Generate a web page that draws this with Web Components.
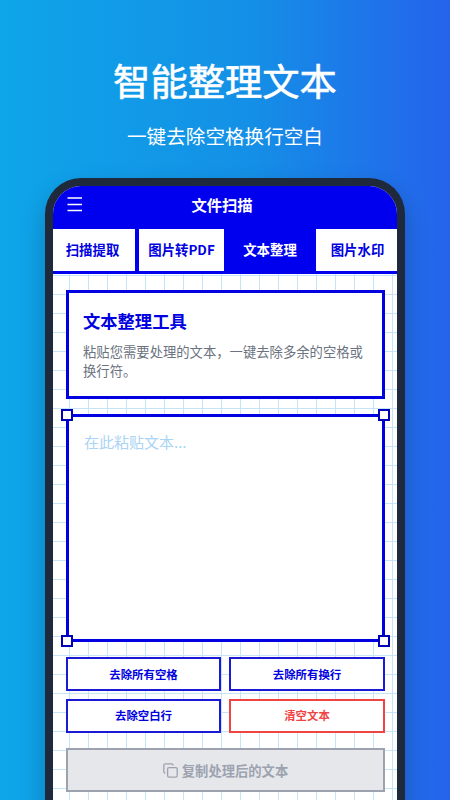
<!DOCTYPE html>
<html lang="zh">
<head>
<meta charset="utf-8">
<title>文件扫描</title>
<style>
    html, body {
        margin: 0;
        padding: 0;
        height: 800px;
        overflow: hidden;
        font-family: "Noto Sans CJK SC", "Noto Sans", sans-serif;
    }
    body {
        background: linear-gradient(90deg, #0ea5e9 0%, #1490e6 55%, #2563eb 100%);
    }
</style>
</head>
<body>
<promo-head></promo-head>
<phone-frame>
    <top-bar>文件扫描</top-bar>
    <tab-strip>
        <tab-item style="width:82px;margin-right:4px;padding-right:3px">扫描提取</tab-item>
        <tab-item style="width:85px">图片转PDF</tab-item>
        <tab-item active style="width:92px">文本整理</tab-item>
        <tab-item style="width:81px;padding-left:2px">图片水印</tab-item>
    </tab-strip>
    <grid-page>
        <tool-card heading="文本整理工具">粘贴您需要处理的文本，一键去除多余的空格或换行符。</tool-card>
        <text-box placeholder="在此粘贴文本..."></text-box>
        <button-grid>
            <action-btn>去除所有空格</action-btn>
            <action-btn>去除所有换行</action-btn>
            <action-btn>去除空白行</action-btn>
            <action-btn danger>清空文本</action-btn>
        </button-grid>
        <copy-btn>复制处理后的文本</copy-btn>
    </grid-page>
</phone-frame>

<script>
class PromoHead extends HTMLElement {
    constructor() {
        super();
        this.attachShadow({ mode: 'open' });
        this.shadowRoot.innerHTML = `
            <style>
                :host {
                    display: flex;
                    flex-direction: column;
                    align-items: center;
                    height: 178px;
                    color: #fff;
                    text-align: center;
                }
                h1 {
                    margin: 54px 0 0;
                    font-size: 37.3px;
                    line-height: 52px;
                    font-weight: 400;
                    -webkit-text-stroke: .6px #fff;
                }
                p {
                    margin: 16px 0 0;
                    font-size: 19.6px;
                    line-height: 28px;
                    font-weight: 400;
                }
            </style>
            <h1>智能整理文本</h1>
            <p>一键去除空格换行空白</p>
        `;
    }
}

class PhoneFrame extends HTMLElement {
    constructor() {
        super();
        this.attachShadow({ mode: 'open' });
        this.shadowRoot.innerHTML = `
            <style>
                :host {
                    display: block;
                    box-sizing: border-box;
                    width: 360px;
                    height: 640px;
                    margin: 0 auto;
                    border: 8px solid #1e293b;
                    border-bottom: 0;
                    border-radius: 36px 36px 0 0;
                    overflow: hidden;
                    background: #fff;
                    box-shadow: 0 12px 24px rgba(0, 0, 0, .22);
                }
            </style>
            <slot></slot>
        `;
    }
}

class TopBar extends HTMLElement {
    constructor() {
        super();
        this.attachShadow({ mode: 'open' });
        this.shadowRoot.innerHTML = `
            <style>
                :host {
                    display: flex;
                    align-items: center;
                    justify-content: center;
                    position: relative;
                    box-sizing: border-box;
                    height: 43px;
                    padding: 0 6px 7px 0;
                    background: #0000ee;
                    color: #fff;
                    font-size: 15.3px;
                    font-weight: 700;
                }
                svg {
                    position: absolute;
                    left: 14px;
                    top: 10px;
                }
            </style>
            <svg width="16" height="16" viewBox="0 0 16 16" fill="none" stroke="#fff" stroke-width="1.3">
                <path d="M0.5 2H15M0.5 8.5H15M0.5 14.5H15"/>
            </svg>
            <slot></slot>
        `;
    }
}

class TabStrip extends HTMLElement {
    constructor() {
        super();
        this.attachShadow({ mode: 'open' });
        this.shadowRoot.innerHTML = `
            <style>
                :host {
                    display: flex;
                    height: 45px;
                    box-sizing: border-box;
                    background: #0000ee;
                    padding-bottom: 3px;
                }
            </style>
            <slot></slot>
        `;
    }
}

class TabItem extends HTMLElement {
    constructor() {
        super();
        this.attachShadow({ mode: 'open' });
        this.shadowRoot.innerHTML = `
            <style>
                :host {
                    display: flex;
                    align-items: center;
                    justify-content: center;
                    flex: none;
                    box-sizing: border-box;
                    padding-bottom: 2px;
                    background: #fff;
                    color: #0000e0;
                    font-size: 13.4px;
                    font-weight: 700;
                }
                :host([active]) {
                    background: #0000ee;
                    color: #fff;
                }
            </style>
            <slot></slot>
        `;
    }
}

class GridPage extends HTMLElement {
    constructor() {
        super();
        this.attachShadow({ mode: 'open' });
        this.shadowRoot.innerHTML = `
            <style>
                :host {
                    display: flex;
                    flex-direction: column;
                    box-sizing: border-box;
                    height: 600px;
                    padding: 16px 12px 0 13px;
                    background-color: #fff;
                    background-image:
                        linear-gradient(#c5e4f7 1px, transparent 1px),
                        linear-gradient(90deg, #c5e4f7 1px, transparent 1px);
                    background-size: 19px 19px;
                    background-position: 16px 1px;
                }
            </style>
            <slot></slot>
        `;
    }
}

class ToolCard extends HTMLElement {
    constructor() {
        super();
        this.attachShadow({ mode: 'open' });
        const heading = this.getAttribute('heading') || '';
        this.shadowRoot.innerHTML = `
            <style>
                :host {
                    display: block;
                    box-sizing: border-box;
                    height: 109px;
                    border: 3px solid #0000e0;
                    background: #fff;
                    padding: 16px 14px 0;
                }
                h2 {
                    margin: 0;
                    font-size: 17.3px;
                    line-height: 24px;
                    font-weight: 700;
                    color: #0000e0;
                }
                p {
                    margin: 9px 0 0;
                    font-size: 13.33px;
                    line-height: 19px;
                    color: #6b7280;
                }
            </style>
            <h2>${heading}</h2>
            <p><slot></slot></p>
        `;
    }
}

class TextBox extends HTMLElement {
    constructor() {
        super();
        this.attachShadow({ mode: 'open' });
        const placeholder = this.getAttribute('placeholder') || '';
        this.shadowRoot.innerHTML = `
            <style>
                :host {
                    display: block;
                    position: relative;
                    box-sizing: border-box;
                    height: 228px;
                    margin-top: 15px;
                    border: 3px solid #0000e0;
                    background: #fff;
                    padding: 14px 15px;
                    font-size: 15px;
                    line-height: 22px;
                    color: #a9d4f5;
                }
                i {
                    position: absolute;
                    box-sizing: border-box;
                    width: 12px;
                    height: 12px;
                    border: 2px solid #0000b8;
                    background: #fff;
                }
                .tl { left: -8px; top: -8px; }
                .tr { right: -8px; top: -8px; }
                .bl { left: -8px; bottom: -8px; }
                .br { right: -8px; bottom: -8px; }
            </style>
            ${placeholder}
            <i class="tl"></i><i class="tr"></i><i class="bl"></i><i class="br"></i>
        `;
    }
}

class ButtonGrid extends HTMLElement {
    constructor() {
        super();
        this.attachShadow({ mode: 'open' });
        this.shadowRoot.innerHTML = `
            <style>
                :host {
                    display: grid;
                    grid-template-columns: 155px 156px;
                    grid-auto-rows: 34px;
                    gap: 7.5px 8px;
                    margin-top: 15px;
                }
            </style>
            <slot></slot>
        `;
    }
}

class ActionBtn extends HTMLElement {
    constructor() {
        super();
        this.attachShadow({ mode: 'open' });
        this.shadowRoot.innerHTML = `
            <style>
                :host {
                    display: flex;
                    align-items: center;
                    justify-content: center;
                    box-sizing: border-box;
                    padding-bottom: 1px;
                    border: 2px solid #1a1ad6;
                    background: #fff;
                    color: #0000e0;
                    font-size: 11.4px;
                    font-weight: 700;
                }
                :host([danger]) {
                    border-color: #ef4444;
                    color: #ef4444;
                }
            </style>
            <slot></slot>
        `;
    }
}

class CopyBtn extends HTMLElement {
    constructor() {
        super();
        this.attachShadow({ mode: 'open' });
        this.shadowRoot.innerHTML = `
            <style>
                :host {
                    display: flex;
                    align-items: center;
                    justify-content: center;
                    gap: 4px;
                    box-sizing: border-box;
                    height: 44px;
                    margin-top: 15.5px;
                    border: 2px solid #9ca3af;
                    background: #e5e7eb;
                    color: #9ca3af;
                    font-size: 13.3px;
                    font-weight: 700;
                }
            </style>
            <svg width="15" height="15" viewBox="0 0 15 15" fill="none" stroke="#9ca3af" stroke-width="1.3">
                <rect x="4.6" y="4.6" width="9.6" height="9.6" rx="1.4"/>
                <path d="M2.4 10.2A1.6 1.6 0 0 1 0.8 8.6V2.4A1.6 1.6 0 0 1 2.4 0.8H8.6A1.6 1.6 0 0 1 10.2 2.4"/>
            </svg>
            <slot></slot>
        `;
    }
}

customElements.define('promo-head', PromoHead);
customElements.define('phone-frame', PhoneFrame);
customElements.define('top-bar', TopBar);
customElements.define('tab-strip', TabStrip);
customElements.define('tab-item', TabItem);
customElements.define('grid-page', GridPage);
customElements.define('tool-card', ToolCard);
customElements.define('text-box', TextBox);
customElements.define('button-grid', ButtonGrid);
customElements.define('action-btn', ActionBtn);
customElements.define('copy-btn', CopyBtn);
</script>
</body>
</html>
